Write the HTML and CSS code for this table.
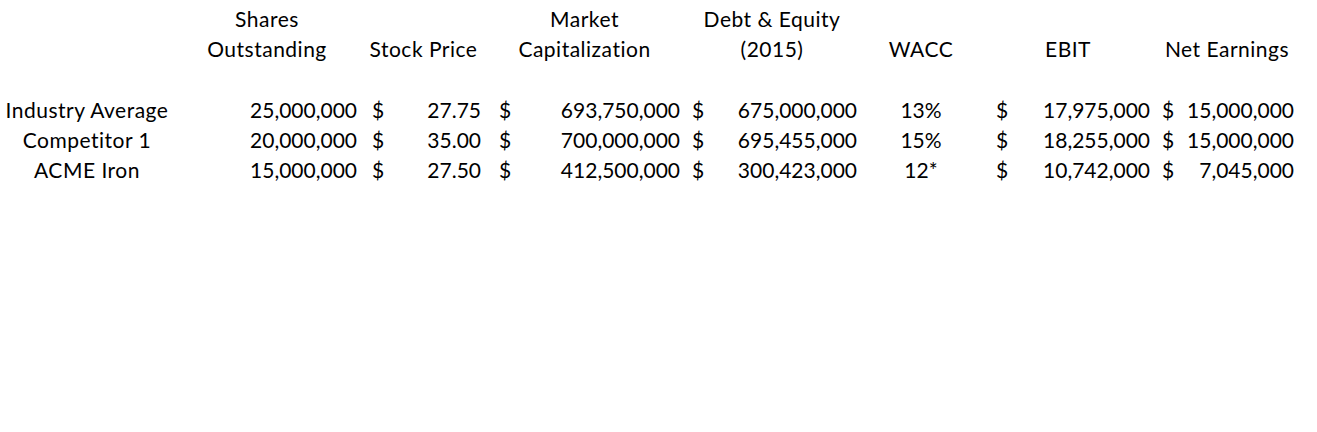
FILE: index.html
```html
<!DOCTYPE html>
<html>
<head>
<meta charset="utf-8">
<link rel="stylesheet" href="styles.css">
</head>
<body>
<div class="sheet">
  <!-- header row 1 -->
  <div class="cell"></div>
  <div class="cell hd">Shares</div>
  <div class="cell"></div>
  <div class="cell hd">Market</div>
  <div class="cell hd">Debt &amp; Equity</div>
  <div class="cell"></div>
  <div class="cell"></div>
  <div class="cell"></div>
  <!-- header row 2 -->
  <div class="cell"></div>
  <div class="cell hd">Outstanding</div>
  <div class="cell hd">Stock Price</div>
  <div class="cell hd">Capitalization</div>
  <div class="cell hd">(2015)</div>
  <div class="cell hd">WACC</div>
  <div class="cell hd">EBIT</div>
  <div class="cell hd">Net Earnings</div>
  <!-- blank row -->
  <div class="cell blank"></div>
  <div class="cell blank"></div>
  <div class="cell blank"></div>
  <div class="cell blank"></div>
  <div class="cell blank"></div>
  <div class="cell blank"></div>
  <div class="cell blank"></div>
  <div class="cell blank"></div>
  <!-- data row 1 -->
  <div class="cell label">Industry Average</div>
  <div class="cell num col-b">25,000,000</div>
  <div class="cell acct col-c"><span>$</span><span>27.75</span></div>
  <div class="cell acct col-d"><span>$</span><span>693,750,000</span></div>
  <div class="cell acct col-e"><span>$</span><span>675,000,000</span></div>
  <div class="cell mid">13%</div>
  <div class="cell acct col-g"><span>$</span><span>17,975,000</span></div>
  <div class="cell acct col-h"><span>$</span><span>15,000,000</span></div>
  <!-- data row 2 -->
  <div class="cell label">Competitor 1</div>
  <div class="cell num col-b">20,000,000</div>
  <div class="cell acct col-c"><span>$</span><span>35.00</span></div>
  <div class="cell acct col-d"><span>$</span><span>700,000,000</span></div>
  <div class="cell acct col-e"><span>$</span><span>695,455,000</span></div>
  <div class="cell mid">15%</div>
  <div class="cell acct col-g"><span>$</span><span>18,255,000</span></div>
  <div class="cell acct col-h"><span>$</span><span>15,000,000</span></div>
  <!-- data row 3 -->
  <div class="cell label">ACME Iron</div>
  <div class="cell num col-b">15,000,000</div>
  <div class="cell acct col-c"><span>$</span><span>27.50</span></div>
  <div class="cell acct col-d"><span>$</span><span>412,500,000</span></div>
  <div class="cell acct col-e"><span>$</span><span>300,423,000</span></div>
  <div class="cell mid">12*</div>
  <div class="cell acct col-g"><span>$</span><span>10,742,000</span></div>
  <div class="cell acct col-h"><span>$</span><span>7,045,000</span></div>
</div>
</body>
</html>
```
FILE: styles.css
```css
html, body {
  margin: 0;
  padding: 0;
  background: #ffffff;
}

.sheet {
  display: grid;
  grid-template-columns: 174px 186px 127px 195px 180px 118px 176px 142px;
  grid-template-rows: 30px 30px 31px 30px 30px 30px;
  padding-top: 4px;
  font-family: "Lato", "Liberation Sans", sans-serif;
  font-size: 21px;
  font-variant-ligatures: none;
  color: #000000;
}

.cell {
  line-height: 30px;
  white-space: nowrap;
}

.hd,
.label,
.mid {
  text-align: center;
}

.hd,
.label {
  letter-spacing: 0.5px;
}

.num {
  text-align: right;
}

.acct {
  display: flex;
  justify-content: space-between;
}

.col-b { padding-right: 3px; }
.col-c { padding-left: 12px; padding-right: 6px; }
.col-d { padding-left: 12px; padding-right: 2px; }
.col-e { padding-left: 10px; padding-right: 5px; }
.col-g { padding-left: 16px; padding-right: 6px; }
.col-h { padding-left: 6px; padding-right: 4px; }
```
